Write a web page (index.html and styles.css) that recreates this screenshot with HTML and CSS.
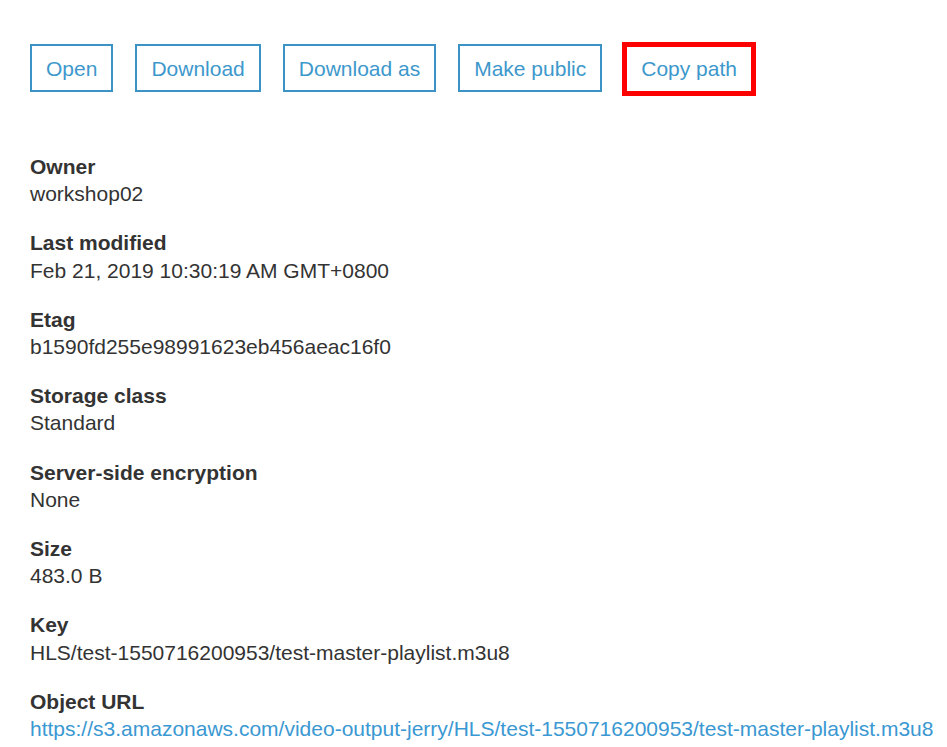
FILE: index.html
```html
<!DOCTYPE html>
<html>
<head>
<meta charset="utf-8">
<link rel="stylesheet" href="styles.css">
</head>
<body>
<div class="page">
  <div class="actions">
    <button class="btn">Open</button>
    <button class="btn">Download</button>
    <button class="btn">Download as</button>
    <button class="btn">Make public</button>
    <button class="btn btn-highlight">Copy path</button>
  </div>
  <dl class="props">
    <div class="prop"><dt>Owner</dt><dd>workshop02</dd></div>
    <div class="prop"><dt>Last modified</dt><dd>Feb 21, 2019 10:30:19 AM GMT+0800</dd></div>
    <div class="prop"><dt>Etag</dt><dd>b1590fd255e98991623eb456aeac16f0</dd></div>
    <div class="prop"><dt>Storage class</dt><dd>Standard</dd></div>
    <div class="prop"><dt>Server-side encryption</dt><dd>None</dd></div>
    <div class="prop"><dt>Size</dt><dd>483.0 B</dd></div>
    <div class="prop"><dt>Key</dt><dd>HLS/test-1550716200953/test-master-playlist.m3u8</dd></div>
    <div class="prop"><dt>Object URL</dt><dd><a class="link" href="#">https://s3.amazonaws.com/video-output-jerry/HLS/test-1550716200953/test-master-playlist.m3u8</a></dd></div>
  </dl>
</div>
</body>
</html>
```
FILE: styles.css
```css
html, body {
  margin: 0;
  padding: 0;
  background: #ffffff;
  overflow: hidden;
}
body {
  font-family: "Liberation Sans", Arial, sans-serif;
  font-size: 21px;
  color: #333333;
}
.page {
  padding: 44px 0 0 30px;
}
.actions {
  display: flex;
  gap: 22px;
  align-items: flex-start;
}
.btn {
  font-family: "Liberation Sans", Arial, sans-serif;
  font-size: 21px;
  line-height: 24px;
  color: #3d98cc;
  background: #ffffff;
  border: 2px solid #3a93c4;
  padding: 11px 14px 9px;
  margin: 0;
  cursor: pointer;
}
.btn-highlight {
  outline: 5px solid #ff0000;
  outline-offset: -2px;
  margin-left: 1px;
  margin-top: 1px;
  padding-top: 10px;
  padding-bottom: 10px;
}
.props {
  margin: 60px 0 0 0;
}
.prop {
  margin-bottom: 22px;
  line-height: 27.2px;
}
.prop dt {
  font-weight: bold;
}
.prop dd {
  margin: 0;
  white-space: nowrap;
}
.link {
  color: #3a98d2;
  text-decoration: none;
}
```
